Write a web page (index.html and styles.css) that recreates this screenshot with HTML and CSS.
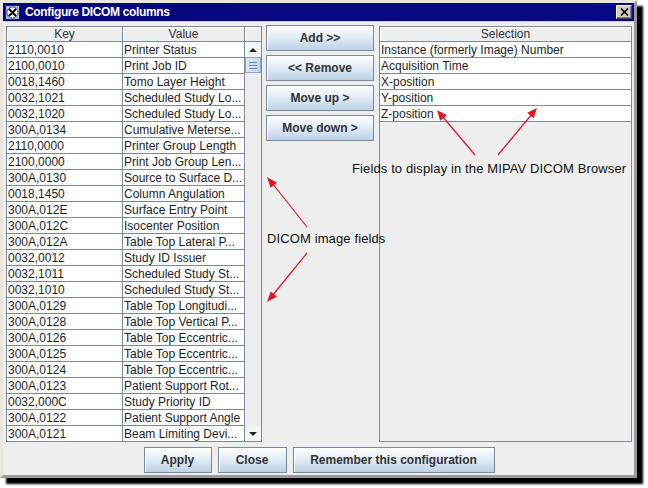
FILE: index.html
```html
<!DOCTYPE html>
<html lang="en">
<head>
    <meta charset="UTF-8">
    <title>Configure DICOM columns</title>
    <link rel="stylesheet" href="styles.css">
</head>
<body>
<div class="page">
    <div class="window">
        <div class="titlebar">
            <span class="app-icon">
                <svg width="15" height="15" viewBox="0 0 15 15">
                    <rect x="0.5" y="0.5" width="14" height="14" fill="#aab4cc" stroke="#1c2450"/>
                    <circle cx="7.5" cy="7.5" r="5.5" fill="#fff" stroke="#3a4aa0"/>
                    <path d="M4 4 L11 11 M11 4 L4 11" stroke="#000" stroke-width="2"/>
                </svg>
            </span>
            <span class="title">Configure DICOM columns</span>
            <span class="close-btn">
                <svg width="9" height="8" viewBox="0 0 9 8">
                    <path d="M1 0.5 L8 7.5 M8 0.5 L1 7.5" stroke="#000" stroke-width="1.6"/>
                </svg>
            </span>
        </div>

        <div class="content">
            <div class="main">
                <div class="pane pane-left">
                    <div class="grid">
                        <div class="grid-head">
                            <div class="hcell key">Key</div>
                            <div class="hcell val">Value</div>
                        </div>
                        <div class="row"><div class="cell key">2110,0010</div><div class="cell val">Printer Status</div></div>
                        <div class="row"><div class="cell key">2100,0010</div><div class="cell val">Print Job ID</div></div>
                        <div class="row"><div class="cell key">0018,1460</div><div class="cell val">Tomo Layer Height</div></div>
                        <div class="row"><div class="cell key">0032,1021</div><div class="cell val">Scheduled Study Lo...</div></div>
                        <div class="row"><div class="cell key">0032,1020</div><div class="cell val">Scheduled Study Lo...</div></div>
                        <div class="row"><div class="cell key">300A,0134</div><div class="cell val">Cumulative Meterse...</div></div>
                        <div class="row"><div class="cell key">2110,0000</div><div class="cell val">Printer Group Length</div></div>
                        <div class="row"><div class="cell key">2100,0000</div><div class="cell val">Print Job Group Len...</div></div>
                        <div class="row"><div class="cell key">300A,0130</div><div class="cell val">Source to Surface D...</div></div>
                        <div class="row"><div class="cell key">0018,1450</div><div class="cell val">Column Angulation</div></div>
                        <div class="row"><div class="cell key">300A,012E</div><div class="cell val">Surface Entry Point</div></div>
                        <div class="row"><div class="cell key">300A,012C</div><div class="cell val">Isocenter Position</div></div>
                        <div class="row"><div class="cell key">300A,012A</div><div class="cell val">Table Top Lateral P...</div></div>
                        <div class="row"><div class="cell key">0032,0012</div><div class="cell val">Study ID Issuer</div></div>
                        <div class="row"><div class="cell key">0032,1011</div><div class="cell val">Scheduled Study St...</div></div>
                        <div class="row"><div class="cell key">0032,1010</div><div class="cell val">Scheduled Study St...</div></div>
                        <div class="row"><div class="cell key">300A,0129</div><div class="cell val">Table Top Longitudi...</div></div>
                        <div class="row"><div class="cell key">300A,0128</div><div class="cell val">Table Top Vertical P...</div></div>
                        <div class="row"><div class="cell key">300A,0126</div><div class="cell val">Table Top Eccentric...</div></div>
                        <div class="row"><div class="cell key">300A,0125</div><div class="cell val">Table Top Eccentric...</div></div>
                        <div class="row"><div class="cell key">300A,0124</div><div class="cell val">Table Top Eccentric...</div></div>
                        <div class="row"><div class="cell key">300A,0123</div><div class="cell val">Patient Support Rot...</div></div>
                        <div class="row"><div class="cell key">0032,000C</div><div class="cell val">Study Priority ID</div></div>
                        <div class="row"><div class="cell key">300A,0122</div><div class="cell val">Patient Support Angle</div></div>
                        <div class="row"><div class="cell key">300A,0121</div><div class="cell val">Beam Limiting Devi...</div></div>
                    </div>
                    <div class="vscroll">
                        <div class="corner"></div>
                        <div class="sb-btn"><span class="tri-up"></span></div>
                        <div class="track">
                            <div class="thumb"><span></span><span></span><span></span></div>
                        </div>
                        <div class="sb-btn"><span class="tri-down"></span></div>
                    </div>
                </div>

                <div class="actions">
                    <button class="btn">Add &gt;&gt;</button>
                    <button class="btn">&lt;&lt; Remove</button>
                    <button class="btn">Move up &gt;</button>
                    <button class="btn">Move down &gt;</button>
                </div>

                <div class="pane pane-right">
                    <div class="grid">
                        <div class="grid-head">
                            <div class="hcell sel">Selection</div>
                        </div>
                        <div class="row"><div class="cell sel">Instance (formerly Image) Number</div></div>
                        <div class="row"><div class="cell sel">Acquisition Time</div></div>
                        <div class="row"><div class="cell sel">X-position</div></div>
                        <div class="row"><div class="cell sel">Y-position</div></div>
                        <div class="row last"><div class="cell sel">Z-position</div></div>
                    </div>
                </div>
            </div>

            <div class="footer">
                <button class="btn btn-apply">Apply</button>
                <button class="btn btn-close">Close</button>
                <button class="btn btn-remember">Remember this configuration</button>
            </div>
        </div>
    </div>

    <!-- annotations drawn over the dialog -->
    <svg class="arrows" width="648" height="488" viewBox="0 0 648 488">
        <g stroke="#e8141c" stroke-width="1.2">
            <line x1="307" y1="227" x2="272" y2="183"/>
            <line x1="307" y1="253" x2="272" y2="296"/>
            <line x1="475" y1="155" x2="442" y2="116"/>
            <line x1="498" y1="155" x2="532" y2="114"/>
        </g>
        <g fill="#e8141c">
            <polygon points="267,177 276.9,182.7 270.6,187.7"/>
            <polygon points="267,302 276.9,296.6 270.7,291.5"/>
            <polygon points="437,110 440.1,120.8 446.8,115.2"/>
            <polygon points="537,108 527.2,112.8 533.6,118.2"/>
        </g>
    </svg>
    <div class="note note-left">DICOM image fields</div>
    <div class="note note-right">Fields to display in the MIPAV DICOM Browser</div>
</div>
</body>
</html>
```

FILE: styles.css
```css
body {
    margin: 0;
    padding: 0;
    background-color: #ffffff;
    font-family: "Liberation Sans", Arial, sans-serif;
    font-size: 12px;
    color: #222;
}
.page {
    position: relative;
    width: 648px;
    height: 488px;
}
.window {
    width: 631px;
    height: 472px;
    border: 3px solid #d4d0c8;
    border-color: #e8e6e0 #9a9a9a #9a9a9a #e8e6e0;
    background-color: #d4d0c8;
    box-shadow: 6px 6px 2px #000;
}
.titlebar {
    display: flex;
    align-items: center;
    height: 18px;
    margin-bottom: 1px;
    padding: 0 2px;
    background: linear-gradient(to right, #06067a, #0a0a86);
    color: #fff;
}
.app-icon {
    display: flex;
    width: 15px;
    height: 15px;
    margin-right: 5px;
}
.title {
    flex: 1;
    font-weight: bold;
    font-size: 12px;
    letter-spacing: -0.35px;
}
.close-btn {
    display: flex;
    align-items: center;
    justify-content: center;
    width: 14px;
    height: 12px;
    background-color: #d4d0c8;
    border: 1px solid;
    border-color: #fff #404040 #404040 #fff;
    box-shadow: inset -1px -1px #808080;
}
.content {
    height: 453px;
    padding: 3px 2px 0 3px;
    background-color: #eeeeee;
    box-sizing: border-box;
}
.main {
    display: flex;
    height: 417px;
}
.pane {
    display: flex;
    height: 416px;
    margin-top: 1px;
    border: 1px solid #7a8a99;
    box-sizing: border-box;
    background-color: #eeeeee;
}
.pane-left {
    width: 256px;
}
.pane-right {
    flex: 1;
    margin-left: 5px;
}
.grid {
    flex: 1;
    display: flex;
    flex-direction: column;
}
.grid-head {
    display: flex;
    height: 15px;
    border-bottom: 1px solid #7a8a99;
    box-sizing: border-box;
}
.hcell {
    height: 14px;
    line-height: 15px;
    text-align: center;
    color: #333;
    background-color: #eeeeee;
    box-shadow: inset 1px 1px #fff;
    box-sizing: border-box;
}
.row {
    display: flex;
    height: 16px;
    background-color: #fff;
    border-bottom: 1px solid #7a8a99;
    box-sizing: border-box;
}
.pane-left .row:last-child {
    border-bottom: none;
    height: 15px;
}
.cell {
    height: 15px;
    line-height: 16px;
    padding-left: 1px;
    color: #1e1e1e;
    white-space: nowrap;
    overflow: hidden;
    box-sizing: border-box;
}
.key {
    width: 116px;
    border-right: 1px solid #7a8a99;
}
.val {
    flex: 1;
}
.sel {
    flex: 1;
}
.vscroll {
    display: flex;
    flex-direction: column;
    width: 16px;
    border-left: 1px solid #7a8a99;
}
.corner {
    height: 14px;
    border-bottom: 1px solid #7a8a99;
    box-shadow: inset 1px 1px #fff;
}
.sb-btn {
    display: flex;
    align-items: center;
    justify-content: center;
    height: 15px;
    background-color: #f4f6f8;
}
.tri-up {
    width: 0;
    height: 0;
    border-left: 4px solid transparent;
    border-right: 4px solid transparent;
    border-bottom: 4px solid #222;
}
.tri-down {
    width: 0;
    height: 0;
    border-left: 4px solid transparent;
    border-right: 4px solid transparent;
    border-top: 4px solid #222;
}
.track {
    flex: 1;
    background-color: #eeeeee;
}
.thumb {
    display: flex;
    flex-direction: column;
    justify-content: center;
    gap: 2px;
    height: 16px;
    padding: 0 3px;
    background: linear-gradient(to right, #dde9f5, #c2d6ea);
    border: 1px solid #8fa7c4;
    box-sizing: border-box;
}
.thumb span {
    height: 1px;
    background-color: #6f8aad;
}
.actions {
    display: flex;
    flex-direction: column;
    gap: 4px;
    width: 108px;
    margin-left: 4px;
}
.btn {
    height: 26px;
    padding: 0;
    font-family: "Liberation Sans", Arial, sans-serif;
    font-size: 12px;
    font-weight: bold;
    color: #333;
    background: linear-gradient(to bottom, #ffffff, #e4edf6 45%, #bdd1e6);
    border: 1px solid #7a8a99;
    box-shadow: inset 1px 1px #fff;
    border-radius: 0;
}
.footer {
    display: flex;
    justify-content: center;
    gap: 6px;
    margin-top: 5px;
}
.footer .btn {
    height: 26px;
}
.btn-apply {
    width: 68px;
}
.btn-close {
    width: 69px;
}
.btn-remember {
    width: 202px;
}
.arrows {
    position: absolute;
    top: 0;
    left: 0;
    pointer-events: none;
}
.note {
    position: absolute;
    font-size: 13px;
    line-height: 15px;
    color: #111;
    letter-spacing: 0.12px;
    white-space: nowrap;
}
.note-left {
    left: 267px;
    top: 231px;
}
.note-right {
    left: 352px;
    top: 161px;
}
```
